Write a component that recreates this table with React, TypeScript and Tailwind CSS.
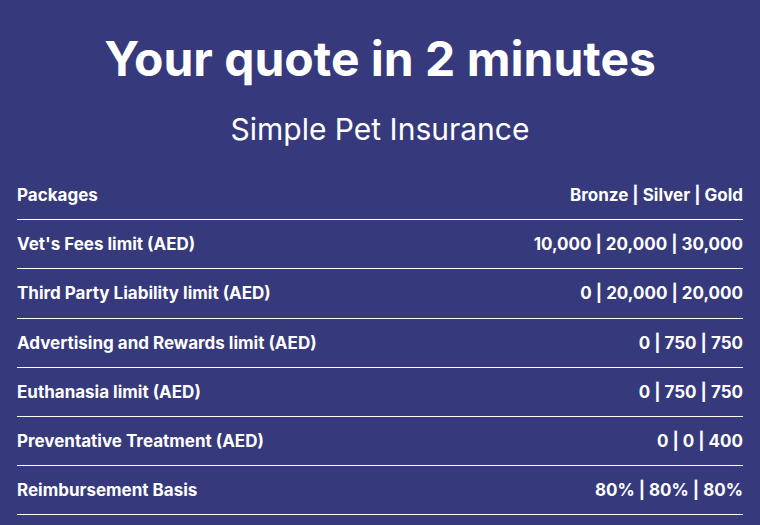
const rows = [
  { label: "Packages", value: "Bronze | Silver | Gold" },
  { label: "Vet's Fees limit (AED)", value: "10,000 | 20,000 | 30,000" },
  { label: "Third Party Liability limit (AED)", value: "0 | 20,000 | 20,000" },
  { label: "Advertising and Rewards limit (AED)", value: "0 | 750 | 750" },
  { label: "Euthanasia limit (AED)", value: "0 | 750 | 750" },
  { label: "Preventative Treatment (AED)", value: "0 | 0 | 400" },
  { label: "Reimbursement Basis", value: "80% | 80% | 80%" },
]

const App = () => {
  return (
    <div className="min-h-screen bg-[#363a7c] text-white font-['Inter',sans-serif] px-[17px] pt-[35px]">
      <h1 className="text-center text-5xl font-bold leading-none">Your quote in 2 minutes</h1>
      <h2 className="text-center text-[30px] leading-none mt-[31px]">Simple Pet Insurance</h2>
      <div className="mt-[27px]">
        {rows.map((row, i) => (
          <div key={i} className="flex justify-between items-center py-3 border-b border-white text-[17px] font-bold leading-[24.2px]">
            <span>{row.label}</span>
            <span>{row.value}</span>
          </div>
        ))}
      </div>
    </div>
  )
}

export default App
